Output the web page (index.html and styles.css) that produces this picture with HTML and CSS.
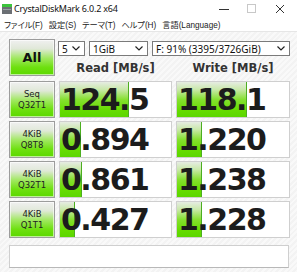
FILE: index.html
```html
<!DOCTYPE html>
<html lang="ja">
<head>
  <meta charset="UTF-8">
  <meta name="viewport" content="width=device-width, initial-scale=1.0">
  <title>CrystalDiskMark 6.0.2 x64</title>
  <link rel="stylesheet" href="styles.css">
</head>
<body>
  <div class="titlebar">
    <svg class="app-icon" width="10" height="10" viewBox="0 0 10 10">
      <rect x="0" y="0" width="10" height="3" fill="#3cc43c"/>
      <rect x="0" y="3" width="10" height="7" fill="#6b6f74"/>
      <rect x="1" y="5" width="8" height="1" fill="#9aa0a6"/>
    </svg>
    <span class="title">CrystalDiskMark 6.0.2 x64</span>
    <div class="winbtns">
      <svg width="10" height="10" viewBox="0 0 10 10"><line x1="0" y1="5.5" x2="10" y2="5.5" stroke="#333" stroke-width="1"/></svg>
      <svg width="10" height="10" viewBox="0 0 10 10"><rect x="0.5" y="0.5" width="8" height="8" fill="none" stroke="#c8c8c8" stroke-width="1"/></svg>
      <svg width="10" height="10" viewBox="0 0 10 10"><path d="M1 1 L9 9 M9 1 L1 9" stroke="#333" stroke-width="1" fill="none"/></svg>
    </div>
  </div>

  <div class="menubar">
    <span>ファイル(F)</span>
    <span>設定(S)</span>
    <span>テーマ(T)</span>
    <span>ヘルプ(H)</span>
    <span>言語(Language)</span>
  </div>

  <div class="main">
    <div class="head">
      <div class="btn btn-all">All</div>
      <div class="selects">
        <div class="sel sel-count">5<svg class="chev" width="8" height="5" viewBox="0 0 8 5"><polyline points="0.5,0.5 4,4 7.5,0.5" fill="none" stroke="#222" stroke-width="1.2"/></svg></div>
        <div class="sel sel-size">1GiB<svg class="chev" width="8" height="5" viewBox="0 0 8 5"><polyline points="0.5,0.5 4,4 7.5,0.5" fill="none" stroke="#222" stroke-width="1.2"/></svg></div>
        <div class="sel sel-drive">F: 91% (3395/3726GiB)<svg class="chev" width="8" height="5" viewBox="0 0 8 5"><polyline points="0.5,0.5 4,4 7.5,0.5" fill="none" stroke="#222" stroke-width="1.2"/></svg></div>
      </div>
      <div class="col-title">Read [MB/s]</div>
      <div class="col-title">Write [MB/s]</div>
    </div>

    <div class="results">
      <div class="btn">Seq<br>Q32T1</div>
      <div class="cell"><div class="fill" style="width: 68px"></div><span class="num">124.5</span></div>
      <div class="cell"><div class="fill" style="width: 69px"></div><span class="num">118.1</span></div>

      <div class="btn">4KiB<br>Q8T8</div>
      <div class="cell"><div class="fill" style="width: 20px"></div><span class="num">0.894</span></div>
      <div class="cell"><div class="fill" style="width: 24px"></div><span class="num">1.220</span></div>

      <div class="btn">4KiB<br>Q32T1</div>
      <div class="cell"><div class="fill" style="width: 21px"></div><span class="num">0.861</span></div>
      <div class="cell"><div class="fill" style="width: 24px"></div><span class="num">1.238</span></div>

      <div class="btn">4KiB<br>Q1T1</div>
      <div class="cell"><div class="fill" style="width: 14px"></div><span class="num">0.427</span></div>
      <div class="cell"><div class="fill" style="width: 24px"></div><span class="num">1.228</span></div>
    </div>

    <div class="comment"></div>
  </div>
</body>
</html>
```

FILE: styles.css
```css
body {
  margin: 0;
  width: 297px;
  height: 272px;
  overflow: hidden;
  font-family: "Noto Sans", "Noto Sans CJK JP", sans-serif;
  background: #ffffff;
  color: #222;
}
.titlebar {
  height: 17px;
  display: flex;
  align-items: center;
  background: #fff;
}
.app-icon {
  margin-left: 2px;
}
.title {
  margin-left: 2px;
  font-size: 9px;
  letter-spacing: -0.2px;
  color: #111;
}
.winbtns {
  margin-left: auto;
  display: flex;
  gap: 18px;
  margin-right: 12px;
}
.menubar {
  height: 14px;
  display: flex;
  align-items: center;
  gap: 6px;
  padding-left: 4px;
  font-family: "Liberation Sans", "Noto Sans CJK JP", sans-serif;
  font-feature-settings: "palt" 1;
  font-size: 8.2px;
  color: #222;
  background: #fff;
}
.main {
  height: 241px;
  padding: 7px 0 0 9px;
  box-sizing: border-box;
  background: repeating-linear-gradient(135deg, #f3f3f3 0, #f3f3f3 2px, #f9f9f9 2px, #f9f9f9 4px);
  border-top: 1px solid #e6e6e6;
}
.head {
  display: grid;
  grid-template-columns: 46px 113px 114px;
  grid-template-rows: 21px 16px;
  column-gap: 4px;
}
.btn {
  box-sizing: border-box;
  border: 1px solid #9c9c9c;
  background: linear-gradient(to bottom, #f0f0f0 0%, #e0e8d8 25%, #a0e860 52%, #6ee010 78%, #5cd800 100%);
  box-shadow: inset 0 0 0 1px rgba(255, 255, 255, 0.6);
  display: flex;
  align-items: center;
  justify-content: center;
  text-align: center;
  font-family: "DejaVu Sans", sans-serif;
  font-size: 8.5px;
  line-height: 11px;
  color: #222;
}
.btn-all {
  grid-row: 1 / 3;
  font-size: 13px;
  font-weight: bold;
  color: #111;
}
.selects {
  grid-column: 2 / 4;
  display: flex;
  gap: 4px;
  margin-top: 2px;
  margin-left: -1px;
  height: 15px;
}
.sel {
  box-sizing: border-box;
  height: 15px;
  border: 1px solid #7a7a7a;
  background: #fff;
  display: flex;
  align-items: center;
  padding-left: 3px;
  padding-right: 4px;
  font-size: 10px;
  color: #111;
}
.chev {
  margin-left: auto;
}
.sel-count { width: 27px; }
.sel-size { width: 59px; }
.sel-drive { width: 138px; }
.col-title {
  text-align: center;
  font-family: "DejaVu Sans", sans-serif;
  font-weight: bold;
  font-size: 11.5px;
  line-height: 16px;
  color: #333;
}
.results {
  margin-top: 5px;
  display: grid;
  grid-template-columns: 46px 113px 114px;
  grid-auto-rows: 37px;
  column-gap: 4px;
  row-gap: 3px;
}
.cell {
  position: relative;
  box-sizing: border-box;
  border: 1px solid #cfcfcf;
  background: #fff;
  display: flex;
  align-items: center;
  overflow: hidden;
}
.fill {
  position: absolute;
  left: 0;
  top: 0;
  bottom: 0;
  background: linear-gradient(to bottom, #e6ece2 0%, #c8e8a8 22%, #86e030 50%, #66dc00 80%, #5cd600 100%);
  border-right: 1px solid #4cae20;
}
.num {
  position: relative;
  padding-left: 1px;
  font-family: "DejaVu Sans", sans-serif;
  font-weight: bold;
  font-size: 30px;
  letter-spacing: -1.5px;
  color: #1c1c1c;
}
.comment {
  margin-top: 7px;
  width: 280px;
  height: 23px;
  box-sizing: border-box;
  border: 1px solid #cfcfcf;
  border-bottom-color: #b8b8b8;
  background: #fff;
}
```
